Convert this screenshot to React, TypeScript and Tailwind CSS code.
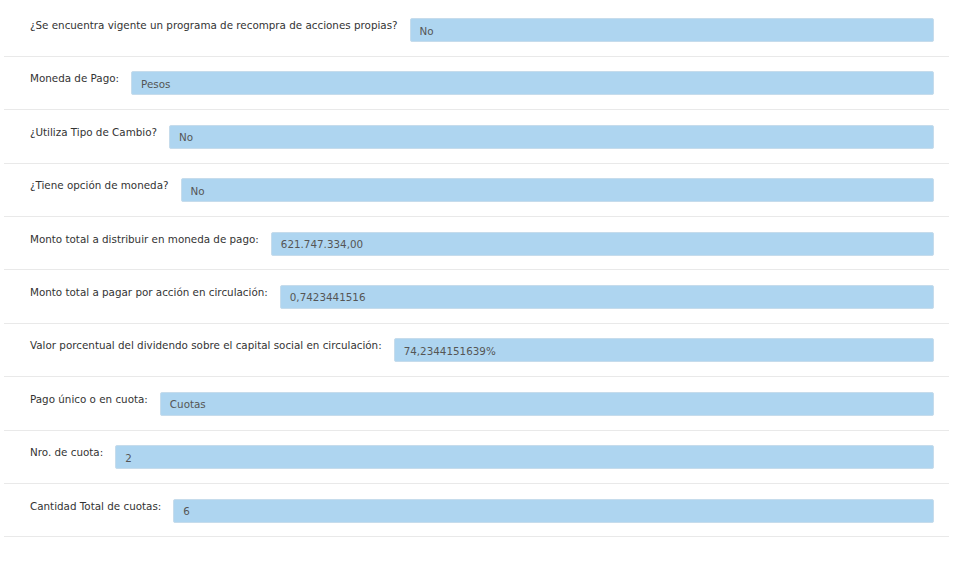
const rows = [
  { label: "¿Se encuentra vigente un programa de recompra de acciones propias?", value: "No" },
  { label: "Moneda de Pago:", value: "Pesos" },
  { label: "¿Utiliza Tipo de Cambio?", value: "No" },
  { label: "¿Tiene opción de moneda?", value: "No" },
  { label: "Monto total a distribuir en moneda de pago:", value: "621.747.334,00" },
  { label: "Monto total a pagar por acción en circulación:", value: "0,7423441516" },
  { label: "Valor porcentual del dividendo sobre el capital social en circulación:", value: "74,2344151639%" },
  { label: "Pago único o en cuota:", value: "Cuotas" },
  { label: "Nro. de cuota:", value: "2" },
  { label: "Cantidad Total de cuotas:", value: "6" },
];

export default function App() {
  return (
    <div className="bg-white min-h-[576px] pt-[3.5px] pl-[4px] w-[949px] font-['DejaVu_Sans',sans-serif] text-[10.35px]">
      {rows.map((r, i) => (
        <div
          key={i}
          className="flex items-start h-[53.4px] pt-[14.5px] pl-[26px] pr-[15px] border-b border-[#e9e9e9]"
        >
          <label className="text-[#333] leading-[15px] mr-[12px] whitespace-nowrap">{r.label}</label>
          <div className="flex-1 h-[24px] bg-[#aed5f0] border border-[#c6dcec] rounded-[2px] px-[9px] pt-[0.5px] leading-[22px] text-[#555]">
            {r.value}
          </div>
        </div>
      ))}
    </div>
  );
}
